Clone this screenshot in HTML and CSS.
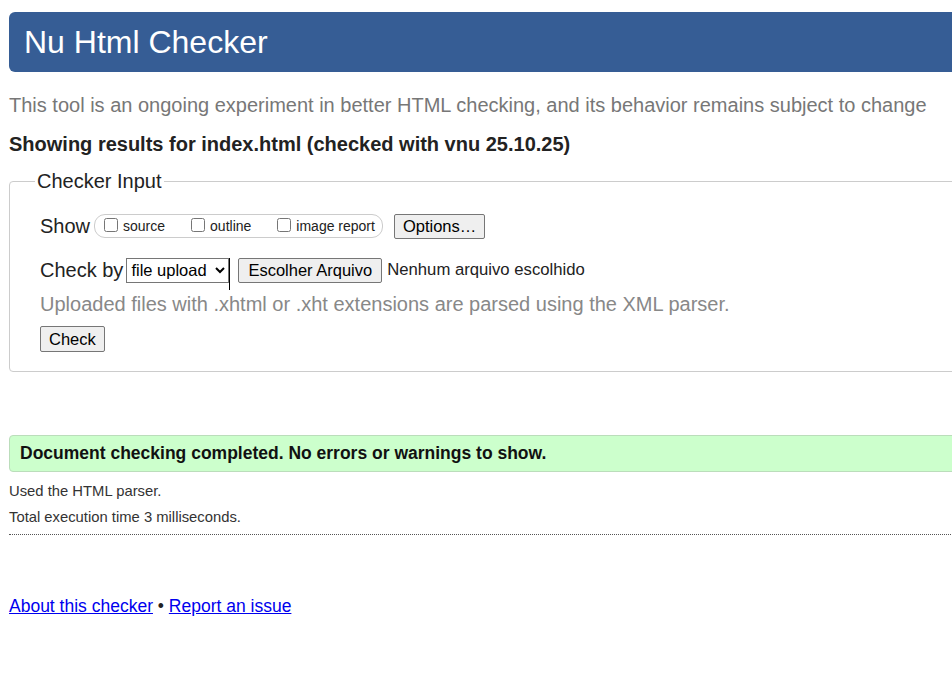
FILE: index.html
```html
<!DOCTYPE html>
<html lang="en">
<head>
<meta charset="utf-8">
<title>Nu Html Checker</title>
<link rel="stylesheet" href="styles.css">
</head>
<body>
<div class="page">
  <h1 class="header">Nu Html Checker</h1>
  <p class="tagline">This tool is an ongoing experiment in better HTML checking, and its behavior remains subject to change</p>
  <p class="showing">Showing results for index.html (checked with vnu 25.10.25)</p>
  <fieldset class="input">
    <legend>Checker Input</legend>
    <div class="row show-row">
      <span class="lbl">Show</span>
      <span class="checks">
        <label class="chk"><input type="checkbox">source</label>
        <label class="chk"><input type="checkbox">outline</label>
        <label class="chk"><input type="checkbox">image report</label>
      </span>
      <button class="btn opts">Options…</button>
    </div>
    <div class="row by-row">
      <span class="lbl">Check by</span>
      <select class="sel"><option>file upload</option></select>
      <span class="caret"></span>
      <button class="btn file">Escolher Arquivo</button>
      <span class="nofile">Nenhum arquivo escolhido</span>
    </div>
    <p class="hint">Uploaded files with .xhtml or .xht extensions are parsed using the XML parser.</p>
    <div class="row"><button class="btn check">Check</button></div>
  </fieldset>
  <div class="success">Document checking completed. No errors or warnings to show.</div>
  <p class="meta">Used the HTML parser.</p>
  <p class="meta second">Total execution time 3 milliseconds.</p>
  <p class="footer"><a href="#">About this checker</a> • <a href="#">Report an issue</a></p>
</div>
</body>
</html>
```

FILE: styles.css
```css
html { overflow: hidden; }
body {
  margin: 0;
  font-family: "Liberation Sans", Arial, sans-serif;
  color: #222;
  background: #fff;
}
.page {
  width: 1040px;
  padding: 12px 0 0 9px;
}
.header {
  margin: 0;
  height: 60px;
  line-height: 60px;
  padding-left: 15px;
  background: #365d95;
  color: #fff;
  font-size: 32px;
  font-weight: normal;
  border-radius: 6px;
}
.tagline {
  margin: 21px 0 0 0;
  font-size: 20px;
  line-height: 24px;
  color: #777;
}
.showing {
  margin: 15px 0 0 0;
  font-size: 20px;
  line-height: 24px;
  font-weight: bold;
  color: #222;
}
.input {
  margin: 14px 0 0 0;
  border: 1px solid #ccc;
  border-radius: 4px;
  padding: 0 0 19px 30px;
}
.input legend {
  font-size: 20px;
  line-height: 23px;
  padding: 0 2px;
  margin-left: -5px;
  color: #222;
}
.row {
  display: flex;
  align-items: center;
}
.show-row { margin-top: 20px; height: 26px; }
.by-row { margin-top: 18px; height: 26px; }
.lbl {
  font-size: 20px;
  color: #222;
  margin-right: 4px;
}
.checks {
  display: inline-flex;
  align-items: center;
  height: 22px;
  border: 1px solid #ccc;
  border-radius: 11px;
  padding: 0 7px 0 6px;
  margin-right: 11px;
}
.chk {
  display: inline-flex;
  align-items: center;
  font-size: 14px;
  color: #222;
  margin-right: 23px;
}
.chk:last-child { margin-right: 0; }
.chk input {
  margin: 0 5px 3px 3px;
  width: 14px;
  height: 14px;
}
.btn {
  font-family: "Liberation Sans", Arial, sans-serif;
  font-size: 16.5px;
  color: #000;
  background: #efefef;
  border: 1px solid #767676;
  border-radius: 2px;
  padding: 2px 9px;
  height: 25px;
  line-height: 19px;
}
.opts { padding: 2px 8px; }
.sel {
  font-family: "Liberation Sans", Arial, sans-serif;
  font-size: 16.5px;
  color: #000;
  height: 25px;
  width: 103px;
  border: 1px solid #767676;
  border-radius: 0;
  background: #fff;
  margin: 0 0 0 -1px;
}
.caret {
  width: 1px;
  height: 32px;
  background: #000;
  margin: 1px 8px 0 0;
  align-self: flex-start;
}
.file { padding: 2px 9px; }
.nofile {
  font-size: 16.7px;
  color: #222;
  margin-left: 5px;
}
.hint {
  margin: 9px 0 0 0;
  font-size: 20px;
  line-height: 24px;
  color: #888;
}
.check { padding: 2px 8px; margin-top: 10px; height: 26px; }
.success {
  margin-top: 63px;
  background: #ccffcc;
  border: 1px solid #bbddbb;
  border-radius: 4px;
  padding: 0 10px;
  height: 35px;
  line-height: 35px;
  font-size: 17.5px;
  font-weight: bold;
  color: #111;
}
.meta {
  margin: 11px 0 0 0;
  font-size: 14.8px;
  line-height: 16px;
  color: #333;
}
.meta.second {
  margin-top: 10px;
  padding-bottom: 9px;
  border-bottom: 1px dotted #555;
}
.footer {
  margin: 61px 0 0 0;
  font-size: 17.5px;
  line-height: 20px;
  color: #222;
}
.footer a { color: #0000ee; }
```
